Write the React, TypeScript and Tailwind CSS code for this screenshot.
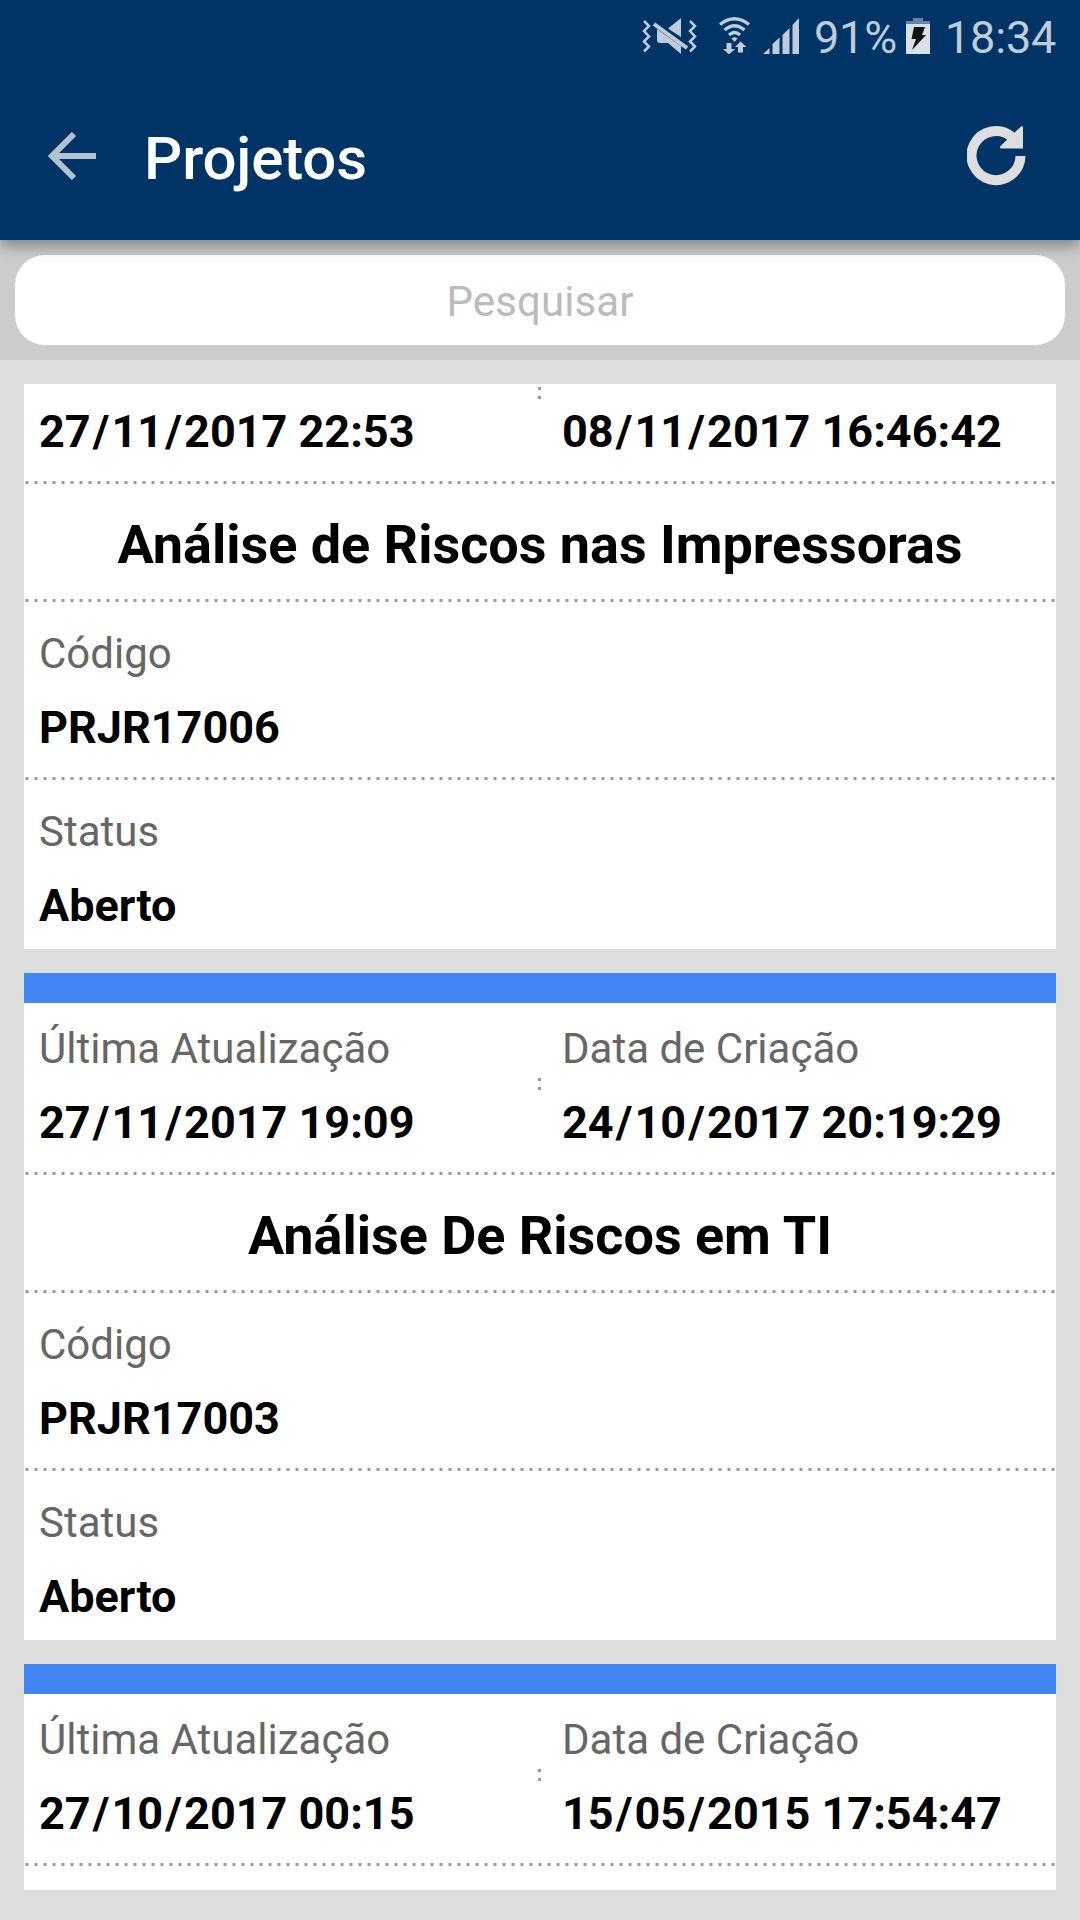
import { Fragment } from "react";

type Project = {
  name?: string;
  code?: string;
  status?: string;
  updatedAt: string;
  createdAt: string;
  scrolledPast?: boolean;
};

const projects: Project[] = [
  {
    name: "Análise de Riscos nas Impressoras",
    code: "PRJR17006",
    status: "Aberto",
    updatedAt: "27/11/2017 22:53",
    createdAt: "08/11/2017 16:46:42",
    scrolledPast: true,
  },
  {
    name: "Análise De Riscos em TI",
    code: "PRJR17003",
    status: "Aberto",
    updatedAt: "27/11/2017 19:09",
    createdAt: "24/10/2017 20:19:29",
  },
  {
    updatedAt: "27/10/2017 00:15",
    createdAt: "15/05/2015 17:54:47",
  },
];

function StatusBar() {
  return (
    <div className="flex h-[75px] items-start text-[#bfccd9]">
      <svg className="ml-[642px] mt-[17px] h-[38px] w-[56px]" viewBox="0 0 56 38" fill="none" stroke="currentColor">
        <path d="M2 4l5 5-5 5 5 5.500-5 5 5 5-5 5M48 4l5 5-5 5 5 5.500-5 5 5 5-5 5" strokeWidth="2.500" />
        <path d="M26 11.500L39 1v19zM15 12l24 17v8L26 26H18q-3 0-3-3z" fill="currentColor" stroke="none" />
        <path d="M12 7l33 24" strokeWidth="4" />
      </svg>
      <svg className="ml-[20px] mt-[16px] h-[38px] w-[34px]" viewBox="0 0 34 38" fill="none" stroke="currentColor">
        <path d="M2 8.500Q16.500-3 31 8.500M6.500 14Q16.500 5.500 26.500 14M11 19Q16.500 14 22 19" strokeWidth="3.200" />
        <path
          d="M13.500 22.500Q16.500 20 19.500 22.500L16.500 26zM8.500 27h5v6h3.500L11 38.500 5 33h3.500zM20 36.500h5V31h3.500L22.500 25.500 17 31h3z"
          fill="currentColor"
          stroke="none"
        />
      </svg>
      <svg className="ml-[11px] mt-[17px] h-[38px] w-[38px]" viewBox="0 0 38 38" fill="currentColor">
        <path d="M0 37L6.500 31v6zM9.500 37V27l7-6.500V37zM19.500 37V18l7-7v26zM29.500 37V8L36 1v36z" />
      </svg>
      <span className="ml-[13px] mt-[11px] w-[82px] text-[45px] leading-[54px] tracking-[-0.2px]">91%</span>
      <svg className="ml-[10px] mt-[18px] h-[36px] w-[24px]" viewBox="0 0 24 36">
        <path d="M7 0h10v3h7v3H0V3h7z" fill="#6685a3" />
        <path d="M0 6h24v30H0z" fill="#d9e0e8" />
        <path d="M8 9h11l-3 8h4L6 32l4-11H5.500z" fill="#111" />
      </svg>
      <span className="ml-[15px] mt-[11px] text-[45px] leading-[54px] tracking-[-0.2px]">18:34</span>
    </div>
  );
}

function Header() {
  return (
    <header className="relative z-10 h-[240px] shrink-0 bg-[#003366] shadow-[0_6px_14px_rgba(0,0,0,0.36)]">
      <StatusBar />
      <div className="flex h-[165px] items-center pb-[3px]">
        <svg className="ml-[48px] mt-[-1px] h-[48px] w-[48px]" viewBox="0 0 48 48" fill="none" stroke="#b2c2d1" strokeWidth="6">
          <path d="M48 24H6M26 2L4 24l22 22" />
        </svg>
        <h1 className="ml-[48px] mt-[5px] text-[60px] font-medium leading-[70px] tracking-[-0.15px] text-white">Projetos</h1>
        <svg className="ml-auto mr-[51px] mt-[-2px] h-[62px] w-[62px]" viewBox="0 0 62 62">
          <path d="M53.500 32A24.500 24.500 0 1 1 45 13" fill="none" stroke="#dedede" strokeWidth="10" />
          <path d="M56 3v21.500H34q-2-1 0-3l20-19q1-1 2 .5z" fill="#dedede" />
        </svg>
      </div>
    </header>
  );
}

function Dots() {
  return (
    <div className="mx-[1px] h-[3px] bg-[repeating-linear-gradient(90deg,#ccc_0_1px,#999_1px_3px,#ccc_3px_4px,transparent_4px_9px)]" />
  );
}

// slashes in dates get a bit of air on both sides
function Value({ text }: { text: string }) {
  return (
    <>
      {text.split("/").map((part, i) => (
        <Fragment key={i}>
          {i > 0 && <span className="mx-[2.100px]">/</span>}
          {part}
        </Fragment>
      ))}
    </>
  );
}

function Field({ label, value = "" }: { label?: string; value?: string }) {
  return (
    <div>
      <p className="h-[58px] text-[42px] leading-[58px] text-[#666]">{label}</p>
      <p className="mt-[15px] whitespace-nowrap text-[45px] font-bold leading-[60px] text-black">
        <Value text={value} />
      </p>
    </div>
  );
}

function ProjectCard({ project }: { project: Project }) {
  return (
    <article className="h-[667px] shrink-0 bg-white">
      <div className="h-[30px] bg-[#4285f4]" />
      <div className="flex h-[169px]">
        <div className="w-[514px] pl-[15px] pt-[17px]">
          <Field label={project.scrolledPast ? "" : "Última Atualização"} value={project.updatedAt} />
        </div>
        <div className="flex w-[3px] flex-col items-center gap-[6px] pt-[75px]">
          <span className="h-[3px] w-[3px] bg-[#999]" />
          <span className="h-[3px] w-[3px] bg-[#999]" />
        </div>
        <div className="flex-1 pl-[21px] pt-[17px]">
          <Field label={project.scrolledPast ? "" : "Data de Criação"} value={project.createdAt} />
        </div>
      </div>
      <Dots />
      {project.name && (
        <>
          <h2 className="flex h-[115px] items-center justify-center pt-[7px] text-[54px] font-bold leading-[64px] tracking-[-0.03px] text-black">
            {project.name}
          </h2>
          <Dots />
          <div className="h-[175px] pl-[15px] pt-[23px]">
            <Field label="Código" value={project.code} />
          </div>
          <Dots />
          <div className="pl-[15px] pt-[23px]">
            <Field label="Status" value={project.status} />
          </div>
        </>
      )}
    </article>
  );
}

export default function App() {
  return (
    <div className="flex h-[1920px] w-[1080px] flex-col overflow-hidden bg-[#ddd] font-[Roboto,sans-serif]">
      <Header />

      <div className="h-[120px] shrink-0 bg-[#ccc] p-[15px]">
        <input
          className="h-[90px] w-full rounded-[30px] bg-white pt-[2px] text-center text-[42px] tracking-[0.1px] outline-none placeholder:text-[#bbb]"
          placeholder="Pesquisar"
        />
      </div>

      {/* list is scrolled a bit, so the first card is cut at the top */}
      <main className="mx-[24px] mt-[24px] h-[1506px] overflow-hidden">
        <div className="-mt-[102px] flex flex-col gap-[24px]">
          {projects.map((project) => (
            <ProjectCard key={project.updatedAt} project={project} />
          ))}
        </div>
      </main>
    </div>
  );
}
